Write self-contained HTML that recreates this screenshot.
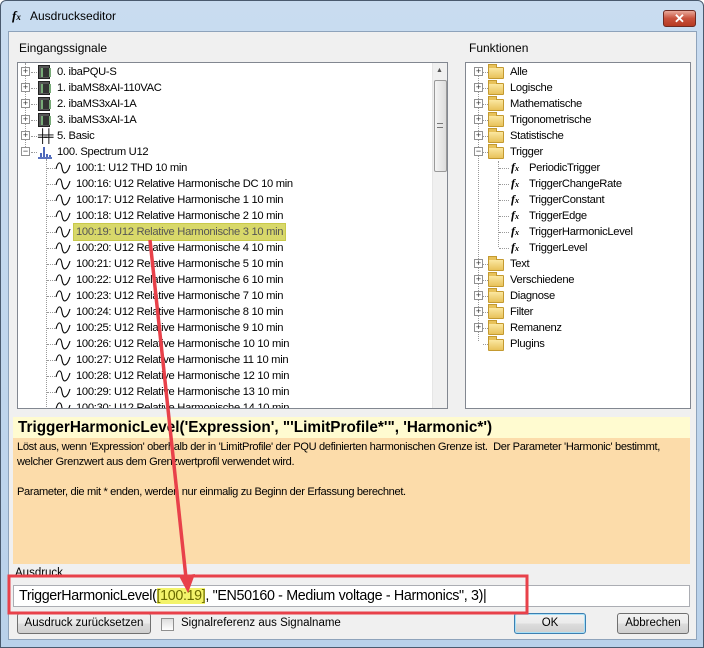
<!DOCTYPE html>
<html><head><meta charset="utf-8"><style>
*{margin:0;padding:0;box-sizing:border-box}
body{width:704px;height:648px;overflow:hidden;font-family:"Liberation Sans",sans-serif;font-size:12px;color:#000;background:#fff;position:relative}
.a{position:absolute}
.frame{left:0;top:0;width:704px;height:648px;background:linear-gradient(#c9dcf0,#b9d1ea);border:1px solid #4a5a6e;border-radius:6px 6px 0 0}
.client{left:8px;top:31px;width:689px;height:609px;background:#f0f0f0;border:1px solid #8ea3bb}
.tree{background:#fff;border:1px solid #828790}
.row{position:absolute;height:16px;line-height:16px;white-space:nowrap;font-size:11.2px;letter-spacing:-0.3px}
.pm{position:absolute;width:9px;height:9px;border:1px solid #919191;background:#fff;font-size:9px;line-height:7px;text-align:center;color:#333}
.dot{position:absolute;border-top:1px dotted #999}
.vdot{position:absolute;border-left:1px dotted #999}
.dev{position:absolute;width:12px;height:14px;background:#555;border:1px solid #222}
.dev:after{content:"";position:absolute;left:2px;top:2px;width:6px;height:9px;border-left:2px solid #7a7;border-right:2px solid #7a7;background:#333}
.fold{position:absolute;width:16px;height:12px;background:linear-gradient(#fbe7a0,#e8c25a);border:1px solid #c49a30;border-radius:1px}
.fold:before{content:"";position:absolute;left:-1px;top:-4px;width:7px;height:3px;background:#e8c25a;border:1px solid #c49a30;border-bottom:none}
.fx{position:absolute;font-family:"Liberation Serif",serif;font-style:italic;font-weight:bold;font-size:12px}
.btn{position:absolute;height:21px;border:1px solid #707070;border-radius:3px;background:linear-gradient(#f2f2f2,#ebebeb 50%,#dddddd 50%,#cfcfcf);text-align:center;line-height:19px;font-size:11.5px}
</style></head><body>
<div class="a frame"></div>
<div class="a fx" style="left:12px;top:8px;font-size:13px">f<span style="font-size:9px">x</span></div>
<div class="a" style="left:30px;top:9px;font-size:12px">Ausdruckseditor</div>
<div class="a" style="left:663px;top:10px;width:33px;height:17px;border:1px solid #6d2a22;border-radius:3px;background:linear-gradient(#e9a99b,#c8513c 50%,#b63a22);color:#fff;font-weight:bold;text-align:center;line-height:15px;font-size:13px">✕</div>
<div class="a client"></div>

<div class="a" style="left:19px;top:41px">Eingangssignale</div>
<div class="a" style="left:469px;top:41px">Funktionen</div>

<div class="a tree" style="left:17px;top:62px;width:431px;height:347px;overflow:hidden">
 <div class="a" style="left:414px;top:0;width:16px;height:345px;background:#f0f0f0;border-left:1px solid #e6e6e6"></div>
 <div class="a" style="left:418px;top:4px;font-size:7px;color:#555">▲</div>
 <div class="a" style="left:416px;top:17px;width:13px;height:92px;border:1px solid #9a9a9a;border-radius:2px;background:linear-gradient(90deg,#f4f4f4,#dcdcdc)"></div>
 <div class="a" style="left:419px;top:60px;width:6px;height:5px;border-top:1px solid #777;border-bottom:1px solid #777"></div>
 <div class="vdot" style="left:7px;top:0;height:90px"></div>
 <div class="vdot" style="left:28px;top:96px;height:260px"></div>
 <div id="L"></div>
</div>

<div class="a tree" style="left:465px;top:62px;width:226px;height:347px;overflow:hidden">
 <div class="vdot" style="left:12px;top:6px;height:272px"></div>
 <div class="vdot" style="left:32px;top:98px;height:86px"></div>
 <div id="R"></div>
</div>

<div class="a" style="left:13px;top:417px;width:677px;height:21px;background:#fffbd0;font-weight:bold;font-size:15.3px;line-height:21px;padding-left:5px;white-space:nowrap">TriggerHarmonicLevel('Expression', "'LimitProfile*'", 'Harmonic*')</div>
<div class="a" style="left:13px;top:438px;width:677px;height:126px;background:#fcdcaa;font-size:11.1px;line-height:15px;padding:2px 0 0 4px;letter-spacing:-0.35px;white-space:nowrap">Löst aus, wenn 'Expression' oberhalb der in 'LimitProfile' der PQU definierten harmonischen Grenze ist.&nbsp; Der Parameter 'Harmonic' bestimmt,<br>welcher Grenzwert aus dem Grenzwertprofil verwendet wird.<br><br>Parameter, die mit * enden, werden nur einmalig zu Beginn der Erfassung berechnet.</div>
<div class="a" style="left:15px;top:567px;font-size:11.5px">Ausdruck</div>
<div class="a" style="left:13px;top:585px;width:677px;height:22px;background:#fff;border:1px solid #abadb3;font-size:14.3px;line-height:20px;padding-left:5px;letter-spacing:-0.35px;white-space:nowrap">TriggerHarmonicLevel(<span style="background:#f3f36a;color:#6a6a00">[100:19]</span>, "EN50160 - Medium voltage - Harmonics", 3)|</div>

<div class="btn" style="left:17px;top:613px;width:134px">Ausdruck zurücksetzen</div>
<div class="a" style="left:161px;top:618px;width:13px;height:13px;border:1px solid #8f8f8f;background:linear-gradient(#ddd,#fff)"></div>
<div class="a" style="left:181px;top:617px;font-size:11.5px">Signalreferenz aus Signalname</div>
<div class="btn" style="left:514px;top:613px;width:72px;border-color:#3c7fb1;box-shadow:inset 0 0 0 1px #a8e0f7">OK</div>
<div class="btn" style="left:617px;top:613px;width:72px">Abbrechen</div>

<svg class="a" style="left:0;top:0" width="704" height="648">
 <rect x="9" y="576" width="518" height="37" fill="none" stroke="#e8414a" stroke-width="3"/>
 <line x1="150" y1="240" x2="186" y2="578" stroke="#e8414a" stroke-width="3.5"/>
 <polygon points="179,576 195,574 188,593" fill="#e8414a"/>
</svg>

<script>
var L=[[0,'dev','0. ibaPQU-S'],[0,'dev','1. ibaMS8xAI-110VAC'],[0,'dev','2. ibaMS3xAI-1A'],[0,'dev','3. ibaMS3xAI-1A'],[0,'bas','5. Basic'],[1,'spec','100. Spectrum U12'],
[2,'','100:1: U12 THD 10 min'],[2,'','100:16: U12 Relative Harmonische DC 10 min']];
for(var i=1;i<=14;i++)L.push([2,'','100:'+(16+i)+': U12 Relative Harmonische '+i+' 10 min']);
var h='';
L.forEach(function(r,i){var y=1+i*16;
 if(r[0]<2){h+='<div class="pm" style="left:3px;top:'+(y+3)+'px">'+(r[0]?'−':'+')+'</div><div class="dot" style="left:13px;top:'+(y+8)+'px;width:6px"></div>';
  if(r[1]=='dev')h+='<div class="dev" style="left:20px;top:'+(y+1)+'px"></div>';
  if(r[1]=='bas')h+='<div class="a" style="left:20px;top:'+y+'px;font-size:13px;line-height:16px;letter-spacing:-3px">╪╪</div>';
  if(r[1]=='spec')h+='<svg class="a" style="left:19px;top:'+y+'px" width="16" height="16"><path d="M1 14H15M4 13V9M7 13V3M10 13V10M13 13V11" stroke="#2244aa" stroke-width="1.6"/></svg>';
  h+='<div class="row" style="left:39px;top:'+y+'px">'+r[2]+'</div>';}
 else{h+='<div class="dot" style="left:29px;top:'+(y+8)+'px;width:8px"></div><svg class="a" style="left:37px;top:'+y+'px" width="16" height="16"><path d="M1 9C3 1 6 1 7 8S12 15 15 5" fill="none" stroke="#000" stroke-width="1.1"/></svg>';
  var hl=(i==10)?'background:#d8d86a;outline:1px solid #c9c94a;color:#555;':'';
  h+='<div class="row" style="left:56px;top:'+y+'px;padding:0 2px;'+hl+'">'+r[2]+'</div>';}
});
document.getElementById('L').innerHTML=h;
var R=[[0,'Alle'],[0,'Logische'],[0,'Mathematische'],[0,'Trigonometrische'],[0,'Statistische'],[1,'Trigger'],[2,'PeriodicTrigger'],[2,'TriggerChangeRate'],[2,'TriggerConstant'],[2,'TriggerEdge'],[2,'TriggerHarmonicLevel'],[2,'TriggerLevel'],[0,'Text'],[0,'Verschiedene'],[0,'Diagnose'],[0,'Filter'],[0,'Remanenz'],[3,'Plugins']];
h='';
R.forEach(function(r,i){var y=1+i*16;
 if(r[0]!=2){if(r[0]<2)h+='<div class="pm" style="left:8px;top:'+(y+3)+'px">'+(r[0]?'−':'+')+'</div>';
  h+='<div class="dot" style="left:17px;top:'+(y+8)+'px;width:5px"></div><div class="fold" style="left:22px;top:'+(y+3)+'px"></div><div class="row" style="left:44px;top:'+y+'px">'+r[1]+'</div>';}
 else{h+='<div class="dot" style="left:33px;top:'+(y+8)+'px;width:10px"></div><div class="fx" style="left:45px;top:'+y+'px">f<span style="font-size:8px">x</span></div><div class="row" style="left:63px;top:'+y+'px">'+r[1]+'</div>';}
});
document.getElementById('R').innerHTML=h;
</script>
</body></html>
